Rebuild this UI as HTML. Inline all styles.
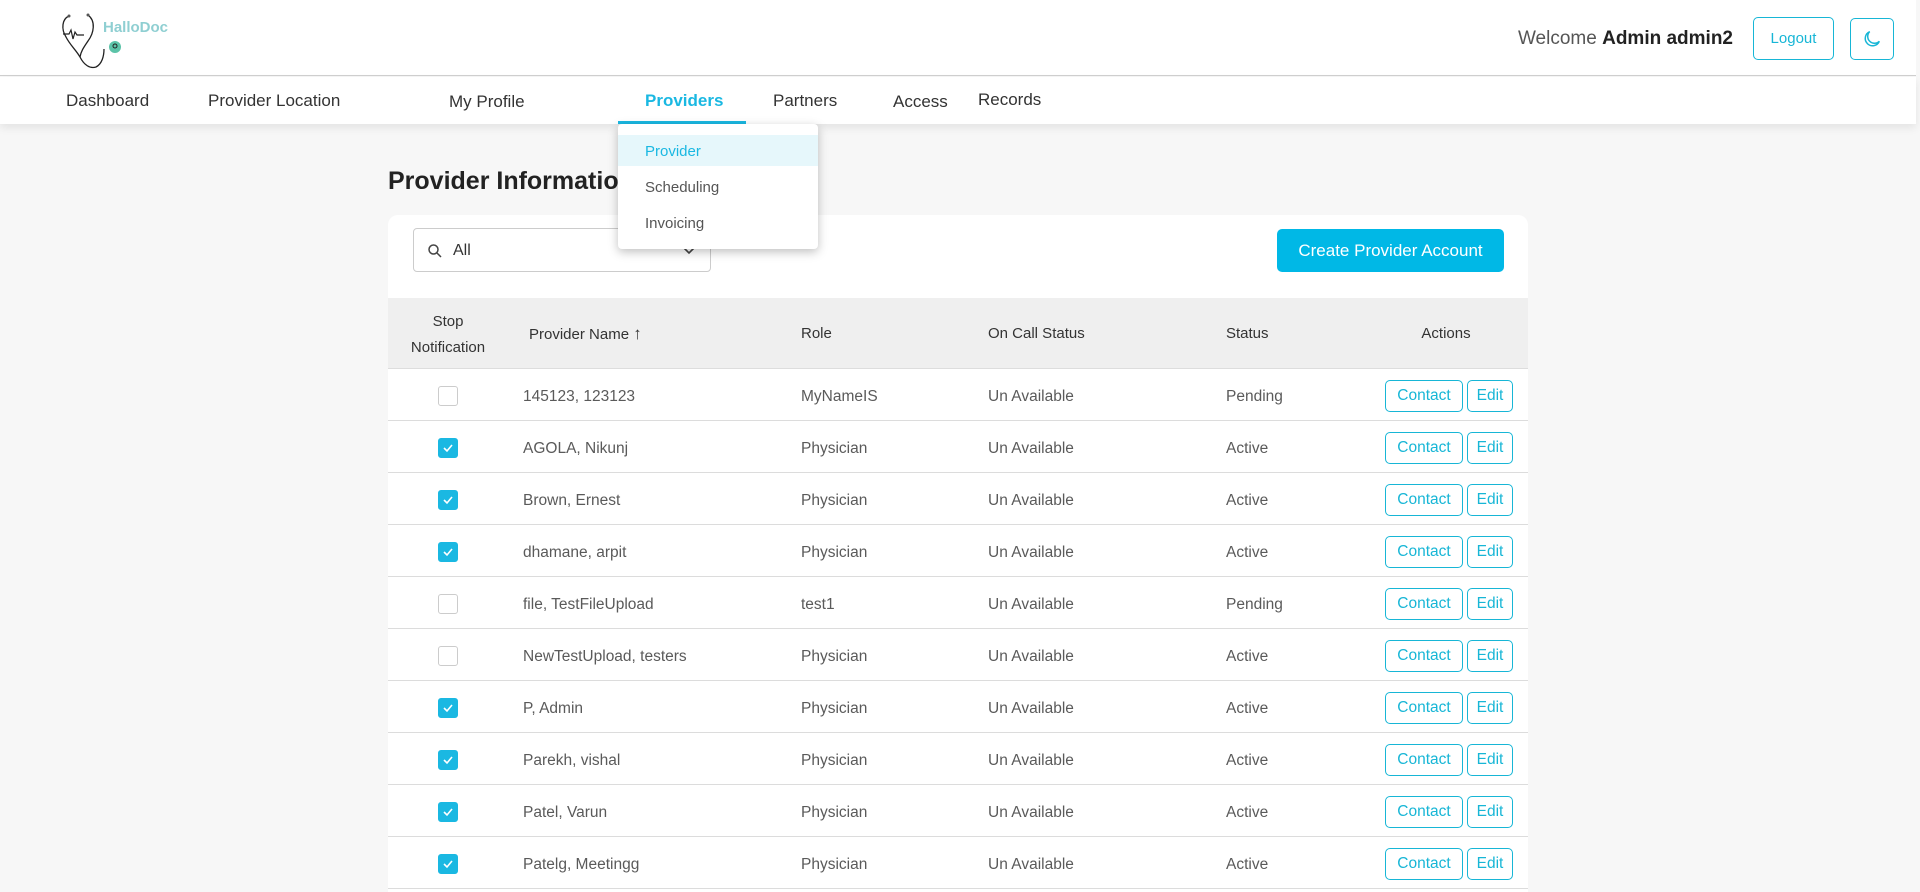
<!DOCTYPE html>
<html><head><meta charset="utf-8"><style>
*{box-sizing:border-box;margin:0;padding:0}
html,body{width:1920px;height:892px;overflow:hidden}
body{background:#f7f7f7;font-family:"Liberation Sans",sans-serif;color:#333;position:relative}
.a{position:absolute}
.hdr{left:0;top:0;width:1916px;height:76px;background:#fff;border-bottom:1px solid #cfcfcf}
.nav{left:0;top:77px;width:1916px;height:47px;background:#fff;box-shadow:0 4px 8px rgba(0,0,0,.08)}
.ni{top:91px;font-size:17px;color:#333}
.btn-o{border:1px solid #17b6d6;border-radius:5px;color:#17b6d6;background:#fff;display:flex;align-items:center;justify-content:center}
.dd{left:618px;top:124px;width:200px;height:125px;background:#fff;border-radius:4px;box-shadow:0 3px 10px rgba(0,0,0,.25);z-index:5}
.di{position:absolute;left:27px;font-size:15px;color:#555}
.card{left:388px;top:215px;width:1140px;height:677px;background:#fff;border-radius:10px 10px 0 0;overflow:hidden}
.th{top:83px;left:0;width:1140px;height:71px;background:#efefef;border-bottom:1px solid #ddd}
.tl{font-size:15px;color:#333}
.row{left:0;width:1140px;height:52px;border-bottom:1px solid #dcdcdc}
.c{position:absolute;top:19px;font-size:15.5px;color:#5a5a5a}
.cb{position:absolute;left:50px;top:17px;width:20px;height:20px;border:1px solid #ccc;border-radius:3px;background:#fff}
.cb.on{background:#1ab8e2;border-color:#1ab8e2}
.cb.on svg{position:absolute;left:3px;top:3px}
.bc{position:absolute;top:11px;height:32px;font-size:15.5px}
</style></head><body>
<div class="a hdr"></div>
<svg class="a" style="left:60px;top:11px" width="120" height="62" viewBox="0 0 120 62">
<path d="M9 5 C2 8 1 18 6 26 C10 34 16 39 20 46 C24 54 30 58 36 56 C42 53 44 45 44 38" fill="none" stroke="#222" stroke-width="1.3"/>
<path d="M28 4 C36 10 34 22 28 30 C24 36 21 40 20 46" fill="none" stroke="#222" stroke-width="1.3"/>
<path d="M3 23 L9 23 L11 19 L13 28 L15 21 L17 24 L24 24" fill="none" stroke="#222" stroke-width="1.2"/>
<circle cx="9" cy="5" r="1.5" fill="#555"/><circle cx="28" cy="4" r="1.5" fill="#555"/>
<circle cx="55" cy="36" r="6" fill="#5cc3a8"/><circle cx="55" cy="35" r="2" fill="none" stroke="#222" stroke-width="1"/>
<text x="43" y="21" font-family="Liberation Sans" font-weight="bold" font-size="15" fill="#8fcfd2">HalloDoc</text>
</svg>
<div class="a" style="right:187px;top:28px;font-size:19px;color:#555">Welcome <b style="color:#222">Admin admin2</b></div>
<div class="a btn-o" style="left:1753px;top:17px;width:81px;height:43px;font-size:15px">Logout</div>
<div class="a btn-o" style="left:1850px;top:18px;width:44px;height:42px">
<svg width="22" height="22" viewBox="0 0 24 24"><path d="M20 14.5A8 8 0 1 1 9.5 4 6.5 6.5 0 0 0 20 14.5z" fill="none" stroke="#17b6d6" stroke-width="1.6"/></svg></div>
<div class="a nav"></div>
<div class="a ni" style="left:66px">Dashboard</div>
<div class="a ni" style="left:208px">Provider Location</div>
<div class="a ni" style="left:449px;top:92px">My Profile</div>
<div class="a ni" style="left:645px;color:#1ab8e2;font-weight:bold">Providers</div>
<div class="a" style="left:618px;top:121px;width:128px;height:3px;background:#1ab8e2"></div>
<div class="a ni" style="left:773px">Partners</div>
<div class="a ni" style="left:893px;top:92px">Access</div>
<div class="a ni" style="left:978px;top:90px">Records</div>
<div class="a dd">
<div class="a" style="left:0;top:11px;width:200px;height:31px;background:#e6f7fb"></div>
<div class="di" style="top:19px;color:#1ab8e2">Provider</div>
<div class="di" style="top:55px">Scheduling</div>
<div class="di" style="top:91px">Invoicing</div>
</div>
<div class="a" style="left:388px;top:167px;font-size:25px;font-weight:bold;color:#222">Provider Information</div>
<div class="a card">
<div class="a" style="left:25px;top:13px;width:298px;height:44px;border:1px solid #ccc;border-radius:4px">
<svg class="a" style="left:12px;top:13px" width="18" height="18" viewBox="0 0 24 24"><circle cx="10" cy="10" r="6" fill="none" stroke="#444" stroke-width="2"/><path d="M14.5 14.5L20 20" stroke="#444" stroke-width="2"/></svg>
<div class="a" style="left:39px;top:13px;font-size:16px;color:#333">All</div>
<svg class="a" style="left:268px;top:17px" width="14" height="10" viewBox="0 0 14 10"><path d="M2 2l5 5 5-5" fill="none" stroke="#444" stroke-width="1.6"/></svg>
</div>
<div class="a" style="left:889px;top:14px;width:227px;height:43px;background:#00b8e6;border-radius:5px;color:#fff;font-size:17px;display:flex;align-items:center;justify-content:center">Create Provider Account</div>
<div class="a th">
<div class="a tl" style="left:0;width:120px;top:11px;text-align:center;line-height:26px">Stop<br>Notification</div>
<div class="a tl" style="left:141px;top:26px">Provider Name <span style="font-size:17px">&#8593;</span></div>
<div class="a tl" style="left:413px;top:27px">Role</div>
<div class="a tl" style="left:600px;top:27px">On Call Status</div>
<div class="a tl" style="left:838px;top:27px">Status</div>
<div class="a tl" style="left:1008px;width:100px;top:27px;text-align:center">Actions</div>
</div>
<div id="rows"></div>
</div>
<script>
var d=[["145123, 123123","MyNameIS","Pending",0],["AGOLA, Nikunj","Physician","Active",1],["Brown, Ernest","Physician","Active",1],["dhamane, arpit","Physician","Active",1],["file, TestFileUpload","test1","Pending",0],["NewTestUpload, testers","Physician","Active",0],["P, Admin","Physician","Active",1],["Parekh, vishal","Physician","Active",1],["Patel, Varun","Physician","Active",1],["Patelg, Meetingg","Physician","Active",1]];
var h="";d.forEach(function(r,i){h+='<div class="a row" style="top:'+(154+i*52)+'px"><div class="cb'+(r[3]?' on':'')+'">'+(r[3]?'<svg width="12" height="12" viewBox="0 0 12 12"><path d="M2 6l3 3 5-6" fill="none" stroke="#fff" stroke-width="1.6"/></svg>':'')+'</div><div class="c" style="left:135px">'+r[0]+'</div><div class="c" style="left:413px">'+r[1]+'</div><div class="c" style="left:600px">Un Available</div><div class="c" style="left:838px">'+r[2]+'</div><div class="bc btn-o" style="left:997px;width:78px">Contact</div><div class="bc btn-o" style="left:1079px;width:46px">Edit</div></div>'});
document.getElementById("rows").innerHTML=h;
</script>
</body></html>
